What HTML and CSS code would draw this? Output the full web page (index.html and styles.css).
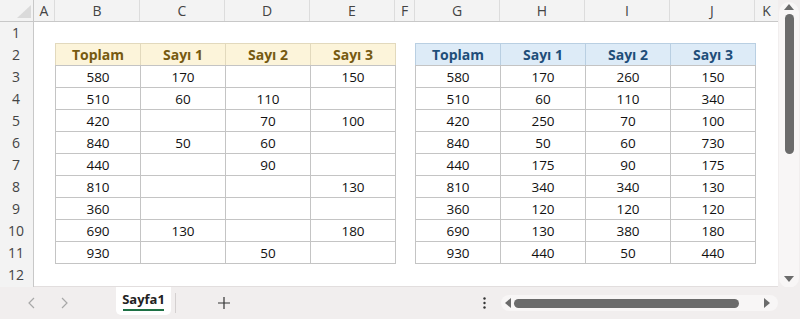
FILE: index.html
```html
<!DOCTYPE html>
<html lang="tr">
	<head>
		<meta charset="UTF-8" />
		<title>Sayfa1</title>
		<link rel="stylesheet" href="styles.css">
	</head>
	<body>
		<div class="app">
			<div class="sheet">
				<div class="corner">
					<svg width="34" height="21" viewBox="0 0 34 21"><polygon points="31,5 31,18 17,18" fill="#dadada" /></svg>
				</div>

				<div class="col-heads">
					<div class="ch w-a">A</div>
					<div class="ch">B</div>
					<div class="ch">C</div>
					<div class="ch">D</div>
					<div class="ch">E</div>
					<div class="ch w-f">F</div>
					<div class="ch">G</div>
					<div class="ch">H</div>
					<div class="ch">I</div>
					<div class="ch">J</div>
					<div class="ch w-k">K</div>
				</div>

				<div class="row-heads">
					<div class="rh">1</div>
					<div class="rh">2</div>
					<div class="rh">3</div>
					<div class="rh">4</div>
					<div class="rh">5</div>
					<div class="rh">6</div>
					<div class="rh">7</div>
					<div class="rh">8</div>
					<div class="rh">9</div>
					<div class="rh">10</div>
					<div class="rh">11</div>
					<div class="rh">12</div>
				</div>

				<div class="cells">
					<!-- Source table with blanks -->
					<table class="data gold">
						<thead>
							<tr><th>Toplam</th><th>Sayı 1</th><th>Sayı 2</th><th>Sayı 3</th></tr>
						</thead>
						<tbody>
							<tr><td>580</td><td>170</td><td></td><td>150</td></tr>
							<tr><td>510</td><td>60</td><td>110</td><td></td></tr>
							<tr><td>420</td><td></td><td>70</td><td>100</td></tr>
							<tr><td>840</td><td>50</td><td>60</td><td></td></tr>
							<tr><td>440</td><td></td><td>90</td><td></td></tr>
							<tr><td>810</td><td></td><td></td><td>130</td></tr>
							<tr><td>360</td><td></td><td></td><td></td></tr>
							<tr><td>690</td><td>130</td><td></td><td>180</td></tr>
							<tr><td>930</td><td></td><td>50</td><td></td></tr>
						</tbody>
					</table>

					<!-- Filled result -->
					<table class="data blue">
						<thead>
							<tr><th>Toplam</th><th>Sayı 1</th><th>Sayı 2</th><th>Sayı 3</th></tr>
						</thead>
						<tbody>
							<tr><td>580</td><td>170</td><td>260</td><td>150</td></tr>
							<tr><td>510</td><td>60</td><td>110</td><td>340</td></tr>
							<tr><td>420</td><td>250</td><td>70</td><td>100</td></tr>
							<tr><td>840</td><td>50</td><td>60</td><td>730</td></tr>
							<tr><td>440</td><td>175</td><td>90</td><td>175</td></tr>
							<tr><td>810</td><td>340</td><td>340</td><td>130</td></tr>
							<tr><td>360</td><td>120</td><td>120</td><td>120</td></tr>
							<tr><td>690</td><td>130</td><td>380</td><td>180</td></tr>
							<tr><td>930</td><td>440</td><td>50</td><td>440</td></tr>
						</tbody>
					</table>
				</div>
			</div>

			<div class="vscroll">
				<div class="vtrack">
					<span class="arrow up"></span>
					<div class="vthumb"></div>
					<span class="arrow down"></span>
				</div>
			</div>

			<div class="tabbar">
				<div class="nav">
					<svg width="10" height="12" viewBox="0 0 10 12"><polyline points="7,1 2,6 7,11" fill="none" stroke="#a8a8a8" stroke-width="1.2" /></svg>
					<svg width="10" height="12" viewBox="0 0 10 12"><polyline points="3,1 8,6 3,11" fill="none" stroke="#a8a8a8" stroke-width="1.2" /></svg>
				</div>
				<div class="tab">Sayfa1</div>
				<div class="sep"></div>
				<div class="add">
					<svg width="12" height="12" viewBox="0 0 12 12"><path d="M6 0 V12 M0 6 H12" stroke="#333" stroke-width="1.2" /></svg>
				</div>
				<div class="dots">
					<svg width="3" height="12" viewBox="0 0 3 12"><circle cx="1.5" cy="1.5" r="1.2" fill="#333" /><circle cx="1.5" cy="6" r="1.2" fill="#333" /><circle cx="1.5" cy="10.5" r="1.2" fill="#333" /></svg>
				</div>
				<div class="htrack">
					<span class="arrow left"></span>
					<div class="hthumb"></div>
					<span class="arrow right"></span>
				</div>
			</div>
		</div>
	</body>
</html>
```

FILE: styles.css
```css
body {
	margin: 0;
	padding: 0;
	width: 800px;
	height: 319px;
	overflow: hidden;
	background: #f1eeee;
	font-family: "Open Sans", "Noto Sans", sans-serif;
}

.app {
	display: grid;
	grid-template-columns: 778px 22px;
	grid-template-rows: 287px 32px;
}

.sheet {
	display: grid;
	grid-template-columns: 34px 744px;
	grid-template-rows: 22px 265px;
	background: #fff;
	border-bottom: 1px solid #e2dede;
	box-sizing: border-box;
}

.corner {
	background: #f3f3f3;
	border-bottom: 1px solid #c8c8c8;
	border-right: 1px solid #c8c8c8;
	box-sizing: border-box;
}

.corner svg {
	display: block;
}

.col-heads {
	display: flex;
	background: #f3f3f3;
	border-bottom: 1px solid #c8c8c8;
	box-sizing: border-box;
}

.ch {
	width: 85px;
	flex: none;
	box-sizing: border-box;
	border-right: 1px solid #dcdcdc;
	text-align: center;
	font-size: 14px;
	line-height: 21px;
	color: #444;
}

.ch.w-a {
	width: 21px;
}

.ch.w-f {
	width: 20px;
}

.ch.w-k {
	width: 23px;
	border-right: none;
}

.row-heads {
	background: #f3f3f3;
	border-right: 1px solid #c8c8c8;
	box-sizing: border-box;
}

.rh {
	height: 22px;
	line-height: 22px;
	text-align: center;
	font-size: 14px;
	color: #444;
	padding-right: 1px;
}

.cells {
	display: flex;
	align-items: flex-start;
	gap: 19px;
	padding: 21px 0 0 21px;
}

.data {
	border-collapse: collapse;
	table-layout: fixed;
	width: 341px;
}

.data th,
.data td {
	width: 85px;
	height: 22px;
	padding: 0;
	border: 1px solid #c4c4c4;
	text-align: center;
	box-sizing: border-box;
}

.data td {
	font-size: 13.5px;
	color: #111;
}

.data th {
	font-size: 14px;
	font-weight: 700;
}

.gold th {
	background: #fcf4da;
	color: #765a10;
	border-color: #e2d9bd;
	border-bottom-color: #c4c4c4;
}

.blue th {
	background: #ddebf7;
	color: #1f4e79;
	border-color: #b9cfe2;
	border-bottom-color: #c4c4c4;
}

/* scrollbars */
.vscroll {
	background: #f1eeee;
	padding: 2px 0 0 1px;
}

.vtrack {
	width: 20px;
	height: 286px;
	background: #f8f6f6;
	border-radius: 10px;
	display: flex;
	flex-direction: column;
	align-items: center;
}

.vthumb {
	width: 9px;
	height: 140px;
	margin-top: 4px;
	background: #6b6b6b;
	border-radius: 5px;
}

.arrow {
	width: 0;
	height: 0;
	border: 5px solid transparent;
}

.arrow.up {
	margin-top: 2px;
	border-bottom: 6px solid #6b6b6b;
	border-top: none;
}

.arrow.down {
	margin-top: auto;
	margin-bottom: 6px;
	border-top: 6px solid #6b6b6b;
	border-bottom: none;
}

.tabbar {
	grid-column: 1 / 3;
	display: flex;
	align-items: center;
	height: 32px;
	background: #f1eeee;
}

.nav {
	display: flex;
	gap: 22px;
	width: 88px;
	padding-left: 27px;
	box-sizing: border-box;
}

.nav svg,
.add svg,
.dots svg {
	display: block;
}

.tab {
	align-self: flex-start;
	margin-left: 28px;
	width: 55px;
	height: 28px;
	background: #fff;
	border-radius: 0 0 5px 5px;
	text-align: center;
	font-size: 13px;
	font-weight: 700;
	line-height: 24px;
	color: #222;
	position: relative;
}

.tab::after {
	content: "";
	position: absolute;
	left: 7px;
	right: 7px;
	top: 22px;
	height: 2px;
	background: #1e7145;
}

.sep {
	width: 1px;
	height: 20px;
	margin-left: 4px;
	background: #d4d0d0;
}

.add {
	margin-left: 42px;
}

.dots {
	margin-left: 253px;
}

.htrack {
	margin-left: 15px;
	width: 277px;
	height: 16px;
	background: #f8f6f6;
	border-radius: 8px;
	display: flex;
	align-items: center;
}

.hthumb {
	width: 225px;
	height: 9px;
	margin-left: 3px;
	background: #6b6b6b;
	border-radius: 5px;
}

.arrow.left {
	margin-left: 4px;
	border-right: 6px solid #6b6b6b;
	border-left: none;
}

.arrow.right {
	margin-left: auto;
	margin-right: 8px;
	border-left: 6px solid #6b6b6b;
	border-right: none;
}
```
